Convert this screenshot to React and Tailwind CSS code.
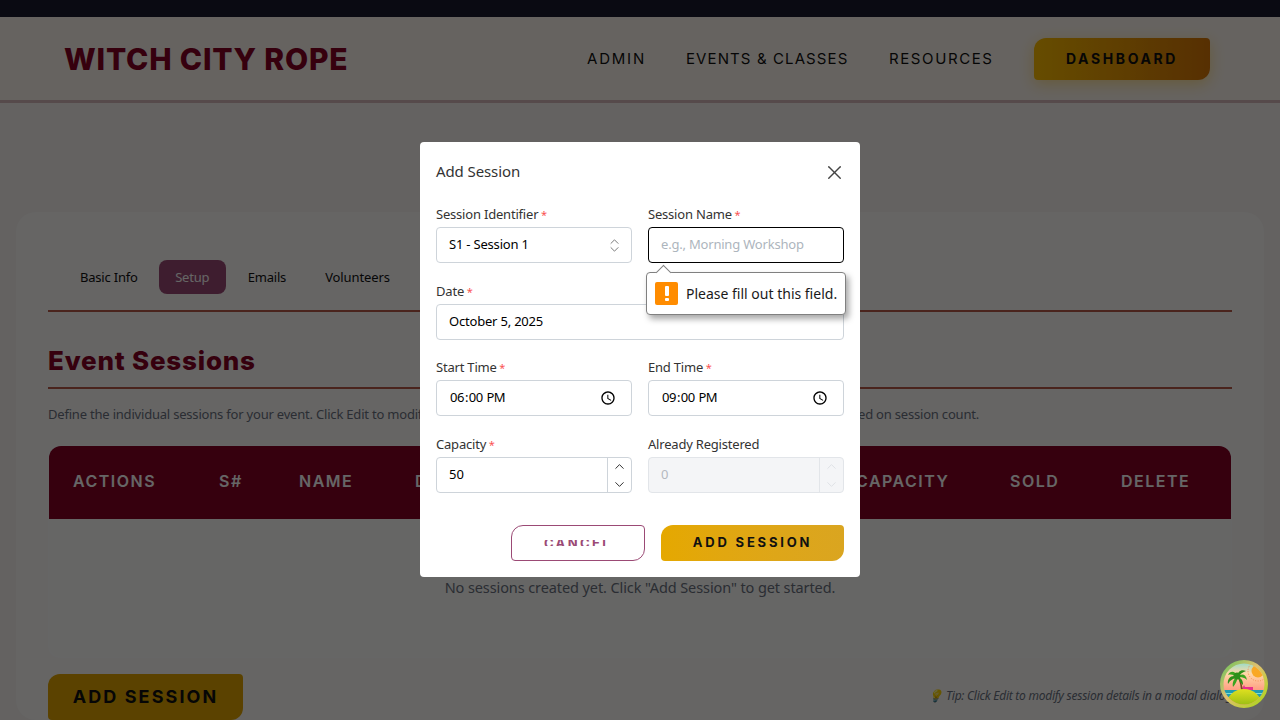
import React from "react";
import { X, ChevronUp, ChevronDown, ChevronsUpDown } from "lucide-react";

const Field = ({ label, required, className, children }) => (
    <div className={className}>
        <label className="mb-[3px] block h-[20px] text-[13px] leading-[21px] tracking-[-0.2px] text-[#333]">
            {label}
            {required && <span className="text-[11px] text-[#fa5252]"> *</span>}
        </label>
        {children}
    </div>
);

const inputClass =
    "h-[36px] w-full rounded-[4px] border border-[#ced4da] bg-white px-3 pb-[2px] text-[13px] tracking-[-0.2px] text-black outline-none";

const timeClass =
    "tracking-[-0.5px] [&::-webkit-calendar-picker-indicator]:mt-[2px] [&::-webkit-calendar-picker-indicator]:h-[16px] [&::-webkit-calendar-picker-indicator]:w-[16px]";

const Stepper = ({ disabled }) => (
    <div className={`flex w-[24px] shrink-0 flex-col items-center justify-center gap-[3px] border-l pt-[1px] ${disabled ? "border-[#e2e5e9] text-[#dde0e4]" : "border-[#ced4da] text-[#222]"}`}>
        <ChevronUp size={15} strokeWidth={1.5} />
        <ChevronDown size={15} strokeWidth={1.5} />
    </div>
);

const Avatar = () => (
    <svg viewBox="0 0 48 48" className="h-full w-full">
        <defs>
            <linearGradient id="ring" x1="0" y1="0" x2="1" y2="1">
                <stop offset="0" stopColor="#5fc45a" />
                <stop offset="0.45" stopColor="#e0c070" />
                <stop offset="1" stopColor="#a4d80f" />
            </linearGradient>
            <linearGradient id="sky" x1="0" y1="0" x2="0" y2="1">
                <stop offset="0" stopColor="#7fdcd0" />
                <stop offset="0.28" stopColor="#ffd8a8" />
                <stop offset="0.65" stopColor="#ff9a80" />
            </linearGradient>
            <linearGradient id="hill" x1="0" y1="0" x2="0" y2="1">
                <stop offset="0" stopColor="#e0e020" />
                <stop offset="1" stopColor="#4e9a06" />
            </linearGradient>
            <clipPath id="inner">
                <circle cx="24" cy="24" r="20.5" />
            </clipPath>
        </defs>
        <circle cx="24" cy="24" r="24" fill="url(#ring)" />
        <g clipPath="url(#inner)">
            <rect width="48" height="48" fill="url(#sky)" />
            <circle cx="38" cy="11" r="6.5" fill="#f9a825" />
            <circle cx="38" cy="11" r="10" fill="none" stroke="#f08a50" strokeWidth="1" strokeDasharray="1 1.5" />
            <rect x="0" y="30" width="48" height="7" fill="#1f9cb0" />
            <rect x="0" y="33" width="48" height="1" fill="#7fdcd0" />
            <path d="M22 29 L24 25 L25 27 L33 27 L33 30 L22 30 Z" fill="#e8308c" />
            <path d="M18 18 C20 22 21 27 21 33 L23 33 C23 27 21 21 19 17 Z" fill="#7a4a1e" />
            <path d="M18 17 C15 10 10 11 8 15 C11 14 14 15 18 17 Z" fill="#3aa51f" />
            <path d="M18 17 C12 14 7 18 8 24 C10 20 14 18 18 17 Z" fill="#2e8f1a" />
            <path d="M18 17 C14 18 12 22 13 27 C16 24 17 20 18 17 Z" fill="#3aa51f" />
            <path d="M18 17 C17 12 21 9 26 11 C23 12 20 14 18 17 Z" fill="#2e8f1a" />
            <path d="M18 17 C21 13 26 14 27 20 C24 17 21 17 18 17 Z" fill="#3aa51f" />
            <path d="M18 17 C21 18 23 20 23 25 C20 23 19 20 18 17 Z" fill="#2e8f1a" />
            <circle cx="17" cy="16" r="3.5" fill="#2e8f1a" />
            <ellipse cx="24" cy="46" rx="18" ry="17" fill="url(#hill)" />
        </g>
    </svg>
);

const headCols = [
    ["ACTIONS", "w-[146px]"],
    ["S#", "w-[80px]"],
    ["NAME", "w-[116px]"],
    ["DATE", "w-[148px]"],
    ["START TIME", "w-[150px]"],
    ["END TIME", "w-[143px]"],
    ["CAPACITY", "w-[154px]"],
    ["SOLD", "w-[111px]"],
    ["DELETE", "w-[90px]"],
];

export default function App() {
    return (
        <div className="relative h-[720px] w-[1280px] overflow-hidden bg-[#faf6f2] font-['Noto_Sans',sans-serif]">
            <div className="h-[17px] bg-[#1a1a2e]" />
            <header className="flex h-[86px] items-center justify-between border-b-[3px] border-[#d8b8bc] bg-[#fff8f0] pr-[70px] pl-[64px] font-['Inter',sans-serif]">
                <h1 className="pt-[1px] text-[30px] font-extrabold tracking-[0.8px] text-[#880124]">WITCH CITY ROPE</h1>
                <nav className="flex items-center text-[15px] text-[#111]">
                    <span className="w-[99px] pt-[2px] tracking-[1.8px]">ADMIN</span>
                    <span className="w-[203px] pt-[2px] tracking-[1.1px]">EVENTS &amp; CLASSES</span>
                    <span className="w-[105px] pt-[2px] tracking-[1.6px] whitespace-nowrap">RESOURCES</span>
                    <button className="ml-[40px] h-[42px] w-[176px] rounded-[12px_4px_12px_4px] bg-linear-to-r from-[#ffbf00] to-[#d97706] text-[14px] font-bold tracking-[2.6px] text-[#111] shadow-[0_4px_15px_rgba(255,191,0,0.4)]">
                        DASHBOARD
                    </button>
                </nav>
            </header>

            <main className="mx-4 mt-[109px] rounded-[20px] bg-white/70 px-8 pt-[48px]">
                <div className="flex h-[52px] items-start border-b-2 border-[#b85a4a] pl-[32px] text-[13px] tracking-[-0.2px] text-[#111]">
                    <span className="leading-[34px]">Basic Info</span>
                    <span className="ml-[21px] h-[34px] w-[67px] rounded-[8px] bg-[#9b4a75] text-center leading-[34px] text-white">Setup</span>
                    <span className="ml-[22px] leading-[34px]">Emails</span>
                    <span className="ml-[39px] leading-[34px] tracking-[-0.1px]">Volunteers</span>
                </div>
                <h2 className="mt-[29px] h-[48px] border-b-2 border-[#b85a4a] font-['Inter',sans-serif] text-[26px] leading-[40px] font-extrabold tracking-[0.8px] text-[#880124]">
                    Event Sessions
                </h2>
                <p className="mt-4 h-[20px] text-[13px] leading-[18px] tracking-[-0.2px] whitespace-nowrap text-[#6b7280]">
                    Define the individual sessions for your event. Click Edit to modify session details, then save. Ticket types and availability are calculated based on session count.
                </p>
                <div className="mt-[20px] h-[213px] rounded-[12px] border border-white/30 bg-white/60">
                    <div className="flex h-[73px] items-center rounded-t-[12px] bg-[#880124] pb-[3px] pl-[24px] font-['Inter',sans-serif] text-[16px] font-semibold tracking-[1.5px] text-white">
                        {headCols.map(([name, width]) => (
                            <span key={name} className={`${width} shrink-0`}>{name}</span>
                        ))}
                    </div>
                    <p className="pt-[56px] text-center text-[14.5px] leading-[24px] tracking-[-0.1px] text-[#6b7280]">
                        No sessions created yet. Click "Add Session" to get started.
                    </p>
                </div>
                <div className="mt-[16px] flex items-center justify-between">
                    <button className="h-[46px] w-[195px] rounded-[12px_4px_12px_4px] bg-[#e3a600] pb-[2px] font-['Inter',sans-serif] text-[18px] font-bold tracking-[2.1px] text-[#111]">
                        ADD SESSION
                    </button>
                    <p className="pb-[2px] text-[12px] tracking-[-0.25px] text-[#6b7280] italic">💡 Tip: Click Edit to modify session details in a modal dialog</p>
                </div>
            </main>

            <div className="absolute inset-0 flex justify-center bg-black/60 pt-[142px] backdrop-blur-[0.5px]">
                <div className="relative h-[435px] w-[440px] rounded-[4px] bg-white p-4">
                    <div className="flex h-[26px] items-center justify-between">
                        <h3 className="text-[15px] tracking-[-0.1px] text-[#333]">Add Session</h3>
                        <X size={23} strokeWidth={1.5} className="-mr-[2px] mt-[2px] text-[#444]" />
                    </div>
                    <form className="mt-[20px] grid grid-cols-2 gap-x-4 gap-y-[17.67px]">
                        <Field label="Session Identifier" required>
                            <div className={`${inputClass} flex items-center justify-between`}>
                                <span className="mt-[2px]">S1 - Session 1</span>
                                <ChevronsUpDown size={17} strokeWidth={1.1} className="-mr-[4px] mt-[2px] text-[#555]" />
                            </div>
                        </Field>
                        <Field label="Session Name" required>
                            <input className={`${inputClass} border-black placeholder:text-[#adb5bd]`} placeholder="e.g., Morning Workshop" />
                        </Field>
                        <Field label="Date" required className="col-span-2">
                            <input className={inputClass} defaultValue="October 5, 2025" />
                        </Field>
                        <Field label="Start Time" required>
                            <input type="time" className={`${inputClass} ${timeClass}`} defaultValue="18:00" />
                        </Field>
                        <Field label="End Time" required>
                            <input type="time" className={`${inputClass} ${timeClass}`} defaultValue="21:00" />
                        </Field>
                        <Field label="Capacity" required>
                            <div className="flex h-[36px] overflow-hidden rounded-[4px] border border-[#ced4da]">
                                <input className="w-full min-w-0 px-3 text-[13px] text-black outline-none" defaultValue="50" />
                                <Stepper />
                            </div>
                        </Field>
                        <Field label="Already Registered">
                            <div className="flex h-[36px] overflow-hidden rounded-[4px] border border-[#e2e5e9] bg-[#f4f5f7]">
                                <input disabled className="w-full min-w-0 px-3 text-[13px] text-[#b4b9bf] outline-none" defaultValue="0" />
                                <Stepper disabled />
                            </div>
                        </Field>
                    </form>
                    <div className="mt-[32px] flex justify-end gap-4">
                        <button className="flex h-[36px] w-[134px] items-center justify-center rounded-[12px_4px_12px_4px] border border-[#9b4a75] bg-white">
                            <span className="h-[6px] overflow-hidden font-['Inter',sans-serif] text-[13px] leading-[6px] font-bold tracking-[2.4px] text-[#9b4a75]">CANCEL</span>
                        </button>
                        <button className="h-[36px] w-[183px] rounded-[12px_4px_12px_4px] bg-linear-to-r from-[#e5a800] to-[#daa520] font-['Inter',sans-serif] text-[13px] font-bold tracking-[2.8px] text-[#111]">
                            ADD SESSION
                        </button>
                    </div>

                    <div className="absolute top-[130px] left-[226px] flex h-[43px] w-[200px] items-center gap-2 rounded-[4px] border border-[#808080] bg-white pl-2 text-[14px] whitespace-nowrap text-[#1a1a1a] shadow-[3px_4px_6px_rgba(0,0,0,0.35)]">
                        <span className="absolute -top-[6px] left-[11px] h-[11px] w-[11px] rotate-45 border-t border-l border-[#808080] bg-white" />
                        <span className="flex h-[23px] w-[23px] shrink-0 flex-col items-center justify-center gap-[2px] rounded-[2px] bg-[#ff8c00]">
                            <span className="h-[10px] w-[4px] rounded-[1px] bg-white" />
                            <span className="h-[3px] w-[4px] rounded-[1px] bg-white" />
                        </span>
                        <span>Please fill out this field.</span>
                    </div>
                </div>
            </div>

            <div className="absolute right-[12px] bottom-[12px] h-[48px] w-[48px]">
                <Avatar />
            </div>
        </div>
    );
}
